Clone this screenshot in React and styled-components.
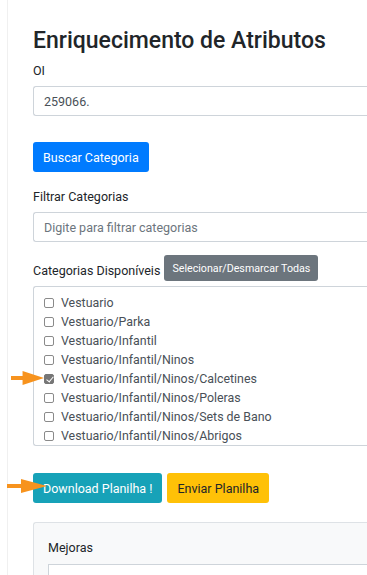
import React, { useState } from "react";
import styled, { createGlobalStyle } from "styled-components";

const GlobalStyle = createGlobalStyle`
  html, body {
    margin: 0;
    padding: 0;
    background: #fff;
    overflow: hidden;
  }
  body {
    font-family: "Roboto", "Liberation Sans", sans-serif;
    color: #212529;
  }
`;

const categorias = [
  "Vestuario",
  "Vestuario/Parka",
  "Vestuario/Infantil",
  "Vestuario/Infantil/Ninos",
  "Vestuario/Infantil/Ninos/Calcetines",
  "Vestuario/Infantil/Ninos/Poleras",
  "Vestuario/Infantil/Ninos/Sets de Bano",
  "Vestuario/Infantil/Ninos/Abrigos",
];

function Arrow({ top, left, width }) {
  return (
    <ArrowWrap style={{ top, left, width }}>
      <svg width="100%" height="16" viewBox="0 0 40 16" preserveAspectRatio="none">
        <rect x="0" y="6" width="16" height="4" fill="#f7931e" />
        <polygon points="14,1 40,8 14,15" fill="#f7931e" />
      </svg>
    </ArrowWrap>
  );
}

function App() {
  const [checked, setChecked] = useState([
    "Vestuario/Infantil/Ninos/Calcetines",
  ]);

  function toggle(cat) {
    if (checked.includes(cat)) {
      setChecked(checked.filter((c) => c !== cat));
    } else {
      setChecked([...checked, cat]);
    }
  }

  return (
    <Page>
      <GlobalStyle />
      <Sidebar />
      <Content>
        <Title>Enriquecimento de Atributos</Title>
        <Label>OI</Label>
        <Input defaultValue="259066." />
        <Button $variant="primary" $mt="26px">
          Buscar Categoria
        </Button>
        <Label $mt="14px">Filtrar Categorias</Label>
        <Input placeholder="Digite para filtrar categorias" />
        <LabelRow>
          <span>Categorias Disponíveis</span>
          <SmallButton>Selecionar/Desmarcar Todas</SmallButton>
        </LabelRow>
        <CheckList>
          {categorias.map((cat) => (
            <CheckItem key={cat}>
              <CheckBox
                type="checkbox"
                checked={checked.includes(cat)}
                onChange={() => toggle(cat)}
              />
              {cat}
            </CheckItem>
          ))}
        </CheckList>
        <ButtonRow>
          <Button $variant="info">Download Planilha !</Button>
          <Button $variant="warning">Enviar Planilha</Button>
        </ButtonRow>
        <Card>
          <CardLabel>Mejoras</CardLabel>
          <CardInput />
        </Card>
      </Content>
      <Arrow top="370px" left="11px" width="33px" />
      <Arrow top="478px" left="7px" width="40px" />
    </Page>
  );
}

const variants = {
  primary: { bg: "#007bff", color: "#fff" },
  info: { bg: "#17a2b8", color: "#fff" },
  warning: { bg: "#ffc107", color: "#212529" },
};

const Page = styled.div`
  position: relative;
  display: flex;
  width: 367px;
  height: 575px;
  overflow: hidden;
`;

const Sidebar = styled.div`
  flex: 0 0 7px;
  border-right: 1px solid #f0f0f0;
`;

const Content = styled.div`
  flex: 0 0 auto;
  width: 360px;
  padding: 24px 0 0 25px;
  display: flex;
  flex-direction: column;
  align-items: flex-start;

  & > * {
    flex-shrink: 0;
  }
`;

const Title = styled.h3`
  margin: 0 0 2px;
  font-size: 23px;
  font-weight: 500;
  line-height: 34px;
  color: #212529;
  white-space: nowrap;
`;

const Label = styled.label`
  display: block;
  margin-top: ${(p) => p.$mt || "0"};
  margin-bottom: 5px;
  font-size: 12.5px;
  line-height: 21px;
  color: #212529;
`;

const Input = styled.input`
  box-sizing: border-box;
  width: 340px;
  height: 30px;
  padding: 0 10px;
  border: 1px solid #ced4da;
  border-right: none;
  border-radius: 3px 0 0 3px;
  font-family: inherit;
  font-size: 12.5px;
  color: #495057;
  outline: none;

  &::placeholder {
    color: #6c757d;
  }
`;

const Button = styled.button`
  margin-top: ${(p) => p.$mt || "0"};
  height: 30px;
  padding: 0 10px;
  border: none;
  border-radius: 3px;
  background: ${(p) => variants[p.$variant].bg};
  color: ${(p) => variants[p.$variant].color};
  font-family: inherit;
  font-size: 12.5px;
  cursor: pointer;
`;

const LabelRow = styled.div`
  display: flex;
  align-items: flex-end;
  gap: 4px;
  margin-top: 13px;
  margin-bottom: 5px;
  font-size: 12.5px;
  line-height: 21px;
  color: #212529;
`;

const SmallButton = styled.button`
  height: 26px;
  padding: 0 8px;
  border: none;
  border-radius: 3px;
  background: #6c757d;
  color: #fff;
  font-family: inherit;
  font-size: 10.7px;
`;

const CheckList = styled.div`
  box-sizing: border-box;
  width: 340px;
  height: 160px;
  padding: 6px 0 0 10px;
  border: 1px solid #ced4da;
  border-right: none;
  border-radius: 3px 0 0 3px;
  overflow: hidden;
`;

const CheckItem = styled.label`
  display: flex;
  align-items: center;
  gap: 7px;
  height: 19px;
  font-size: 12.4px;
  color: #495057;
`;

const CheckBox = styled.input`
  appearance: none;
  -webkit-appearance: none;
  box-sizing: border-box;
  margin: 0;
  width: 10px;
  height: 10px;
  border: 1px solid #8a8a8a;
  border-radius: 2px;
  background: #fff;
  position: relative;

  &:checked {
    background: #767676;
    border-color: #767676;
  }

  &:checked::after {
    content: "";
    position: absolute;
    left: 2.5px;
    top: 0px;
    width: 3px;
    height: 6px;
    border: solid #fff;
    border-width: 0 1.5px 1.5px 0;
    transform: rotate(40deg);
  }
`;

const ButtonRow = styled.div`
  display: flex;
  gap: 5px;
  margin-top: 27px;
`;

const Card = styled.div`
  box-sizing: border-box;
  width: 340px;
  margin-top: 19px;
  padding: 14px 0 0 14px;
  height: 80px;
  background: #f8f9fa;
  border: 1px solid #dee2e6;
  border-right: none;
  border-radius: 3px 0 0 3px;
`;

const CardLabel = styled.div`
  font-size: 12.5px;
  line-height: 21px;
  color: #212529;
`;

const CardInput = styled.div`
  margin-top: 6px;
  height: 30px;
  border: 1px solid #ced4da;
  border-right: none;
  background: #fff;
`;

const ArrowWrap = styled.div`
  position: absolute;
  height: 16px;
  pointer-events: none;
  line-height: 0;
`;

export default App;
